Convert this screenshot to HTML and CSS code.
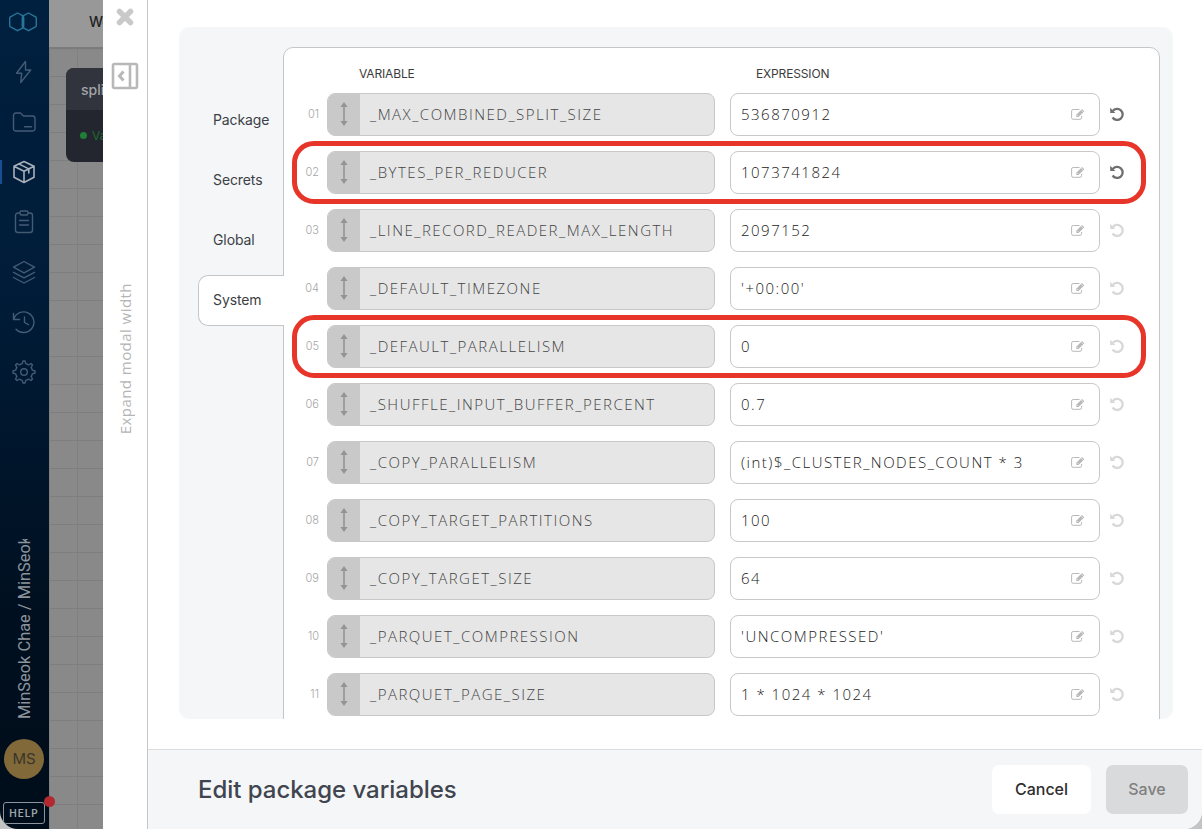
FILE: index.html
```html
<!DOCTYPE html>
<html lang="en">
<head>
  <meta charset="UTF-8" />
  <meta name="viewport" content="width=device-width, initial-scale=1.0"/>
  <title>Edit package variables</title>
  <link rel="stylesheet" href="styles.css">
</head>
<body>

  <svg class="sprite">
    <symbol id="sort" viewBox="0 0 8 26">
      <path d="M4 5v16" stroke="currentColor" stroke-width="1.6"/>
      <path d="M4 1l3.600 5H.4zM4 25l3.600-5H.4z" fill="currentColor"/>
    </symbol>
    <symbol id="edit" viewBox="0 0 14 12">
      <path d="M8.500 1.500H2.300A1.600 1.600 0 0 0 .6 3.100v6.600a1.600 1.600 0 0 0 1.700 1.600H9a1.600 1.600 0 0 0 1.600-1.600V8" fill="none" stroke="currentColor" stroke-width="1"/>
      <path d="M5.300 9V6.700L11 1l2.300 2.200L7.600 9z" fill="currentColor"/>
      <path d="M6.300 7l1 1M10.200 2.200l2 2" stroke="#fff" stroke-width=".6"/>
    </symbol>
    <symbol id="undo" viewBox="0 0 14 14">
      <path d="M2.700 4.200A5.500 5.500 0 1 1 2.600 10.500" fill="none" stroke="currentColor" stroke-width="2.300"/>
      <path d="M.2.800v5.200h5.200z" fill="currentColor"/>
    </symbol>
  </svg>

  <div class="app">
    <nav class="sidebar">
      <svg class="logo" width="30" height="20" viewBox="0 0 30 20">
        <path d="M9.500 1L14 3.300a2 2 0 0 1 1.700 2v8.800a2 2 0 0 1-1.200 2L9.500 18.700 3 15.200a2 2 0 0 1-1.300-2V6.500a2 2 0 0 1 1.300-2z"/>
        <path d="M20.500 1L27 4.500a2 2 0 0 1 1.300 2v6.700a2 2 0 0 1-1.300 2l-6.500 3.500-5-2.700a2 2 0 0 1-1.200-2V5.300a2 2 0 0 1 1.200-1.700z"/>
      </svg>
      <ul class="menu">
        <li><svg viewBox="0 0 24 24"><path d="M13.500 1.500L4.500 13.200h5.200l-1 9.300 10-12.500h-5.200z"/></svg></li>
        <li><svg viewBox="0 0 24 24"><path d="M1.500 5.500a2.500 2.500 0 0 1 2.500-2.500h4.500l3 3H20.500A2.500 2.500 0 0 1 23 8.500v10a2.500 2.500 0 0 1-2.500 2.500H4a2.500 2.500 0 0 1-2.500-2.500zM12.500 16.800h7"/></svg></li>
        <li class="active"><svg viewBox="0 0 24 24"><path d="M12 1.500l10 4.700v11L12 22.500 2 17.200v-11zM2 6.200l10 5 10-5M12 11.200v11.300M6.800 3.900l10 5v4"/></svg></li>
        <li><svg viewBox="0 0 24 24"><path d="M8 3H6a2.500 2.500 0 0 0-2.500 2.500V20A2.500 2.500 0 0 0 6 22.500h12a2.500 2.500 0 0 0 2.500-2.500V5.500A2.500 2.500 0 0 0 18 3h-2M8 2.500A1.500 1.500 0 0 1 9.500 1h5A1.500 1.500 0 0 1 16 2.500v1A1.500 1.500 0 0 1 14.500 5h-5A1.500 1.500 0 0 1 8 3.500zM7.500 10.500h9M7.500 15h9"/></svg></li>
        <li><svg viewBox="0 0 24 24"><path d="M12 1.500l10.500 5.700L12 12.800 1.500 7.200zM1.500 12.300L12 17.800l10.500-5.500M1.500 17.500L12 23l10.500-5.500"/></svg></li>
        <li><svg viewBox="0 0 24 24"><path d="M1.500 3.500v6h6M1.800 9A10.300 10.300 0 1 1 4 19.200M12.500 7v5.500l4 2.200"/></svg></li>
        <li><svg viewBox="0 0 24 24"><circle cx="12" cy="12" r="3.300"/><path d="M10.200 3.600L11 1h2l.8 2.600 2.800 1.200 2.400-1.300 1.500 1.500-1.300 2.400 1.200 2.800L23 11v2l-2.600.8-1.200 2.800 1.300 2.400-1.500 1.500-2.400-1.300-2.800 1.200L13 23h-2l-.8-2.600-2.800-1.200L5 20.500 3.500 19l1.300-2.400-1.200-2.800L1 13v-2l2.600-.8 1.200-2.800L3.500 5 5 3.500l2.400 1.300z"/></svg></li>
      </ul>
      <div class="account">MinSeok Chae / MinSeok</div>
      <div class="avatar">MS</div>
      <div class="help">HELP<span class="dot"></span></div>
    </nav>

    <main class="workspace">
      <header class="topbar">Wo</header>
      <div class="node">
        <div class="node-name">split</div>
        <div class="node-status"><i></i>Va</div>
      </div>
    </main>

    <aside class="expander">
      <svg class="close" width="20" height="20" viewBox="0 0 20 20"><path d="M4.500 4.500l11 11M15.500 4.500l-11 11"/></svg>
      <svg class="expand" width="28" height="28" viewBox="0 0 28 28">
        <rect x="2" y="2" width="24" height="24" rx="1.500"/>
        <path d="M19 2v24"/>
        <path class="chevron" d="M12.500 9.500L8.500 14l4 4.500"/>
      </svg>
      <span class="expander-label">Expand modal width</span>
    </aside>

    <section class="modal">
      <div class="modal-body">
        <div class="panel">
          <ul class="tabs">
            <li>Package</li>
            <li>Secrets</li>
            <li>Global</li>
            <li class="selected">System</li>
          </ul>
          <div class="variables">
            <div class="heading"><span>VARIABLE</span><span>EXPRESSION</span></div>

            <div class="row changed">
              <span class="num">01</span>
              <div class="variable"><span class="handle"><svg><use href="#sort"/></svg></span><span class="name">_MAX_COMBINED_SPLIT_SIZE</span></div>
              <div class="expression"><span>536870912</span><svg><use href="#edit"/></svg></div>
              <svg class="undo"><use href="#undo"/></svg>
            </div>
            <div class="row changed marked">
              <span class="num">02</span>
              <div class="variable"><span class="handle"><svg><use href="#sort"/></svg></span><span class="name">_BYTES_PER_REDUCER</span></div>
              <div class="expression"><span>1073741824</span><svg><use href="#edit"/></svg></div>
              <svg class="undo"><use href="#undo"/></svg>
            </div>
            <div class="row">
              <span class="num">03</span>
              <div class="variable"><span class="handle"><svg><use href="#sort"/></svg></span><span class="name">_LINE_RECORD_READER_MAX_LENGTH</span></div>
              <div class="expression"><span>2097152</span><svg><use href="#edit"/></svg></div>
              <svg class="undo"><use href="#undo"/></svg>
            </div>
            <div class="row">
              <span class="num">04</span>
              <div class="variable"><span class="handle"><svg><use href="#sort"/></svg></span><span class="name">_DEFAULT_TIMEZONE</span></div>
              <div class="expression"><span>'+00:00'</span><svg><use href="#edit"/></svg></div>
              <svg class="undo"><use href="#undo"/></svg>
            </div>
            <div class="row marked">
              <span class="num">05</span>
              <div class="variable"><span class="handle"><svg><use href="#sort"/></svg></span><span class="name">_DEFAULT_PARALLELISM</span></div>
              <div class="expression"><span>0</span><svg><use href="#edit"/></svg></div>
              <svg class="undo"><use href="#undo"/></svg>
            </div>
            <div class="row">
              <span class="num">06</span>
              <div class="variable"><span class="handle"><svg><use href="#sort"/></svg></span><span class="name">_SHUFFLE_INPUT_BUFFER_PERCENT</span></div>
              <div class="expression"><span>0.7</span><svg><use href="#edit"/></svg></div>
              <svg class="undo"><use href="#undo"/></svg>
            </div>
            <div class="row">
              <span class="num">07</span>
              <div class="variable"><span class="handle"><svg><use href="#sort"/></svg></span><span class="name">_COPY_PARALLELISM</span></div>
              <div class="expression"><span>(int)$_CLUSTER_NODES_COUNT * 3</span><svg><use href="#edit"/></svg></div>
              <svg class="undo"><use href="#undo"/></svg>
            </div>
            <div class="row">
              <span class="num">08</span>
              <div class="variable"><span class="handle"><svg><use href="#sort"/></svg></span><span class="name">_COPY_TARGET_PARTITIONS</span></div>
              <div class="expression"><span>100</span><svg><use href="#edit"/></svg></div>
              <svg class="undo"><use href="#undo"/></svg>
            </div>
            <div class="row">
              <span class="num">09</span>
              <div class="variable"><span class="handle"><svg><use href="#sort"/></svg></span><span class="name">_COPY_TARGET_SIZE</span></div>
              <div class="expression"><span>64</span><svg><use href="#edit"/></svg></div>
              <svg class="undo"><use href="#undo"/></svg>
            </div>
            <div class="row">
              <span class="num">10</span>
              <div class="variable"><span class="handle"><svg><use href="#sort"/></svg></span><span class="name">_PARQUET_COMPRESSION</span></div>
              <div class="expression"><span>'UNCOMPRESSED'</span><svg><use href="#edit"/></svg></div>
              <svg class="undo"><use href="#undo"/></svg>
            </div>
            <div class="row">
              <span class="num">11</span>
              <div class="variable"><span class="handle"><svg><use href="#sort"/></svg></span><span class="name">_PARQUET_PAGE_SIZE</span></div>
              <div class="expression"><span>1 * 1024 * 1024</span><svg><use href="#edit"/></svg></div>
              <svg class="undo"><use href="#undo"/></svg>
            </div>
          </div>
        </div>
      </div>
      <footer class="modal-footer">
        <h1>Edit package variables</h1>
        <button class="button">Cancel</button>
        <button class="button save" disabled>Save</button>
      </footer>
    </section>
  </div>

</body>
</html>
```
FILE: styles.css
```css
*,
*::after {
  box-sizing: border-box;
}
body {
  margin: 0;
  font-family: Inter, "Liberation Sans", sans-serif;
  background-color: #c4c4c4;
}
ul {
  list-style: none;
  margin: 0;
  padding: 0;
}
.sprite {
  display: none;
}
.app {
  display: flex;
  height: 829px;
  overflow: hidden;
  border-radius: 0 0 18px 18px;
}

/* left navigation */
.sidebar {
  display: flex;
  flex-direction: column;
  align-items: center;
  width: 49px;
  flex: none;
  background: linear-gradient(#00203f, #001c38 35%, #000f1f 75%, #000d1a);
}
.logo {
  flex: none;
  margin-top: 12px;
  margin-right: 3px;
  fill: none;
  stroke: #28759a;
  stroke-width: 1.4;
}
.menu {
  margin-top: 15px;
  width: 100%;
}
.menu li {
  display: flex;
  justify-content: center;
  align-items: center;
  height: 50px;
  padding-right: 1px;
}
.menu svg {
  width: 24px;
  height: 24px;
  fill: none;
  stroke: #445b74;
  stroke-width: 1.4;
  stroke-linejoin: round;
  stroke-linecap: round;
}
.menu .active {
  background: linear-gradient(#174e91, #174e91) 0 13px / 2px 24px no-repeat;
}
.menu .active svg {
  stroke: #a8b0b9;
  stroke-width: 1.6;
}
.account {
  margin-top: auto;
  height: 180px;
  writing-mode: vertical-rl;
  transform: rotate(180deg);
  overflow: hidden;
  white-space: nowrap;
  font-family: Roboto, sans-serif;
  font-size: 16.400px;
  line-height: 20px;
  color: #8d949c;
}
.avatar {
  flex: none;
  width: 40px;
  height: 40px;
  margin: 20px 1px 0 0;
  border-radius: 50%;
  background-color: #81693a;
  color: #3a3529;
  font-size: 15px;
  line-height: 39px;
  text-align: center;
}
.help {
  position: relative;
  z-index: 1;
  flex: none;
  width: 42px;
  height: 22px;
  margin: 23px 1px 5px 0;
  border: 1px solid #8d949c;
  border-radius: 3px;
  color: #a0a6ac;
  font-size: 10px;
  font-weight: 600;
  letter-spacing: 1px;
  line-height: 21px;
  text-align: center;
}
.dot {
  position: absolute;
  top: -7px;
  right: -11px;
  width: 11px;
  height: 11px;
  border-radius: 50%;
  background-color: #b22a30;
}

/* dimmed page behind the modal */
.workspace {
  width: 54px;
  flex: none;
  overflow: hidden;
  background-color: #898989;
  background-image:
    linear-gradient(90deg, #808080 1px, transparent 1px),
    linear-gradient(#7e7e7e 1px, transparent 1px);
  background-size: 28px 28px;
  background-position: 0 20px;
}
.topbar {
  height: 47px;
  padding-left: 40px;
  background-color: #989898;
  box-shadow: 0 1px 2px #777;
  color: #222;
  font-size: 14px;
  font-weight: 500;
  line-height: 44px;
}
.node {
  width: 120px;
  height: 94px;
  margin: 21px 0 0 17px;
  border-radius: 8px;
  overflow: hidden;
  background-color: #23262e;
}
.node-name {
  height: 42px;
  padding-left: 15px;
  background-color: #32343d;
  color: #a3a4a8;
  font-size: 14px;
  font-weight: 500;
  line-height: 43px;
}
.node-status {
  display: flex;
  align-items: center;
  height: 50px;
  padding-left: 14px;
  color: #1b6b30;
  font-size: 12px;
}
.node-status i {
  width: 7px;
  height: 7px;
  margin-right: 5px;
  border-radius: 50%;
  background-color: #1f7f38;
}

.expander {
  display: flex;
  flex-direction: column;
  align-items: center;
  width: 45px;
  flex: none;
  border-right: 1px solid #c6c6c6;
  background-color: #fff;
}
.expander svg {
  flex: none;
  fill: none;
}
.close {
  margin-top: 7px;
  stroke: #c9c9c9;
  stroke-width: 5.500;
  stroke-linecap: round;
}
.expand {
  margin-top: 35px;
  stroke: #b8b8b8;
  stroke-width: 2.600;
}
.chevron {
  stroke-width: 3;
}
.expander-label {
  margin-top: 193px;
  writing-mode: vertical-rl;
  transform: rotate(180deg);
  color: #b5b5b5;
  font-family: "Open Sans", sans-serif;
  font-size: 15px;
  letter-spacing: .450px;
  line-height: 20px;
  white-space: nowrap;
}

/* modal */
.modal {
  display: flex;
  flex-direction: column;
  flex: 1;
  background-color: #fff;
}
.modal-body {
  flex: 1;
  min-height: 0;
  padding: 27px 29px 30px 31px;
}
.panel {
  display: flex;
  height: 692px;
  padding: 20px 13px 0 19px;
  overflow: hidden;
  border-radius: 10px;
  background-color: #f4f6f8;
}
.tabs {
  position: relative;
  z-index: 1;
  width: 86px;
  margin-right: -1px;
  padding-top: 48px;
  flex: none;
}
.tabs li {
  height: 51px;
  margin-bottom: 9px;
  padding-left: 14px;
  border: 1px solid transparent;
  border-right: 0;
  color: #3c3f45;
  font-size: 14px;
  letter-spacing: -.1px;
  line-height: 48px;
}
.tabs .selected {
  border-color: #c4c6c8;
  border-radius: 10px 0 0 10px;
  background-color: #fff;
}
.variables {
  flex: 1;
  height: 720px;
  border: 1px solid #c4c6c8;
  border-radius: 10px 10px 0 0;
  background-color: #fff;
}
.heading {
  display: grid;
  grid-template-columns: 397px 1fr;
  height: 45px;
  padding-left: 75px;
  color: #3c3c3c;
  font-size: 12px;
  letter-spacing: -.150px;
  line-height: 51px;
}
.row {
  position: relative;
  display: grid;
  grid-template-columns: 28px 388px 370px 14px;
  align-items: center;
  height: 43px;
  margin-bottom: 15px;
  padding-left: 7px;
}
.num {
  color: #a6a6a6;
  font-size: 11px;
  font-weight: 300;
  text-align: right;
  padding-bottom: 2px;
}
.variable,
.expression {
  display: flex;
  align-items: center;
  height: 43px;
  margin-left: 8px;
  margin-right: -8px;
  border: 1px solid #c8c8c8;
  border-radius: 8px;
  overflow: hidden;
  font-family: "Open Sans", sans-serif;
  font-size: 15px;
  font-weight: 300;
  letter-spacing: 1.500px;
  white-space: nowrap;
}
.variable span + span,
.expression span {
  padding-bottom: 2px;
}
.variable {
  background-color: #e6e6e6;
  color: #444;
}
.handle {
  display: flex;
  align-items: center;
  justify-content: center;
  width: 32px;
  height: 43px;
  margin-right: 10px;
  background-color: #c9c9c9;
  color: #949494;
}
.handle svg {
  width: 8px;
  height: 26px;
  margin-bottom: 2px;
}
.expression {
  justify-content: space-between;
  margin-left: 23px;
  margin-right: -23px;
  padding: 0 14px 0 10px;
  color: #222;
}
.expression svg {
  width: 14px;
  height: 12px;
  margin-bottom: 1px;
  color: #b8b8b8;
}
.undo {
  width: 14px;
  height: 14px;
  margin: 0 0 2px 33px;
  color: #d8d8d8;
}
.changed .undo {
  color: #6f6f6f;
}
.marked::after {
  content: "";
  position: absolute;
  top: -10px;
  left: 8px;
  width: 854px;
  height: 63px;
  border: 5px solid #e8352a;
  border-radius: 22px;
}

.modal-footer {
  display: flex;
  align-items: center;
  height: 80px;
  padding: 0 14px 0 50px;
  border-top: 1px solid #dcdddf;
  background-color: #f4f6f8;
}
.modal-footer h1 {
  flex: 1;
  margin: 0;
  color: #41454f;
  font-size: 24px;
  font-weight: 500;
  letter-spacing: -.030px;
}
.button {
  width: 99px;
  height: 49px;
  padding: 0 0 2px;
  border: none;
  border-radius: 7px;
  background-color: #fff;
  color: #2e2e2e;
  font-family: inherit;
  font-size: 16px;
  font-weight: 500;
}
.save {
  width: 82px;
  margin-left: 15px;
  background-color: #d9dadb;
  color: #808080;
}
```
